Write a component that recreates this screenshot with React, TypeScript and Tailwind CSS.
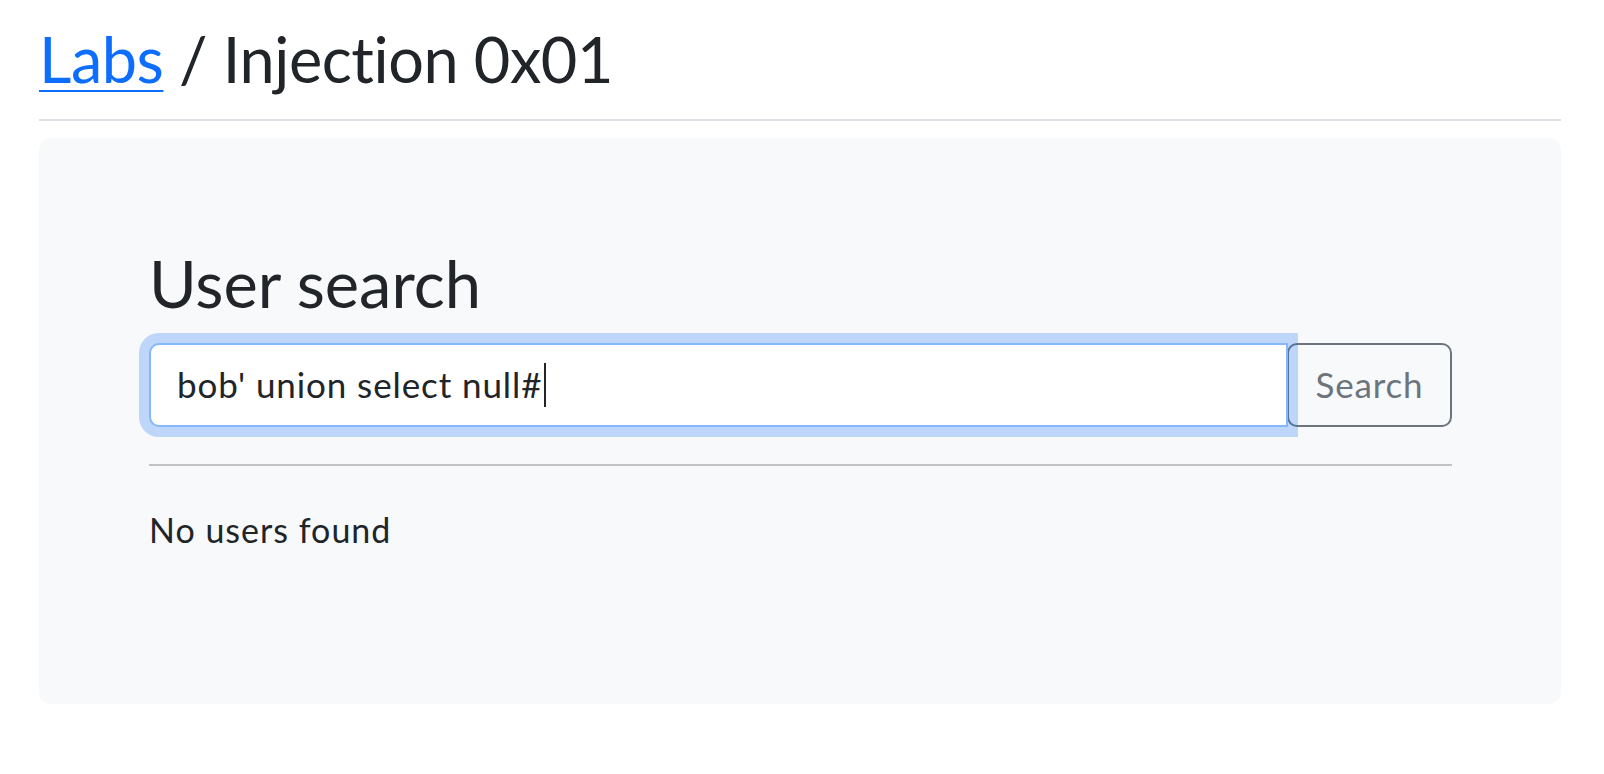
export default function App() {
  const query = "bob' union select null#";

  return (
    <div
      className="min-h-screen bg-white text-[#212529] [font-variant-ligatures:none]"
      style={{ fontFamily: "Lato, 'Noto Sans', sans-serif" }}
    >
      <div className="ml-[39px] w-[1522px] pt-[21px]">
        <h1 className="text-[63px] font-normal leading-[1.2] tracking-[-0.45px]">
          <a href="#" className="text-[#0d6efd] underline decoration-2 underline-offset-[7px]">
            Labs
          </a>{" "}
          / Injection 0x01
        </h1>

        <hr className="mt-[22px] border-0 border-t-2 border-[#dee2e6]" />

        <div className="mt-[17px] rounded-[12px] bg-[#f8f9fa] pl-[110px] pr-[109px] pt-[106px] pb-[149px]">
          <h2 className="text-[65px] font-normal leading-[1.2]">User search</h2>

          <div className="mt-[21px] flex">
            <div className="relative flex h-[84px] flex-1 items-center rounded-l-[10px] border-2 border-[#86b7fe] bg-white pl-[26px] text-[35px] tracking-[0.9px] shadow-[0_0_0_10px_rgba(13,110,253,0.25)]">
              <span className="whitespace-pre">{query}</span>
              <span className="ml-[2px] h-[44px] w-[2px] bg-[#212529]" />
            </div>
            <button
              type="button"
              className="-ml-px h-[84px] w-[165px] rounded-[10px] border-2 border-[#6c757d] bg-transparent text-[35px] tracking-[0.8px] text-[#6c757d]"
            >
              Search
            </button>
          </div>

          <hr className="mt-[37px] border-0 border-t-2 border-[#c2c3c4]" />

          <p className="mt-[38px] text-[34px] leading-[1.5] tracking-[1px]">No users found</p>
        </div>
      </div>
    </div>
  );
}
